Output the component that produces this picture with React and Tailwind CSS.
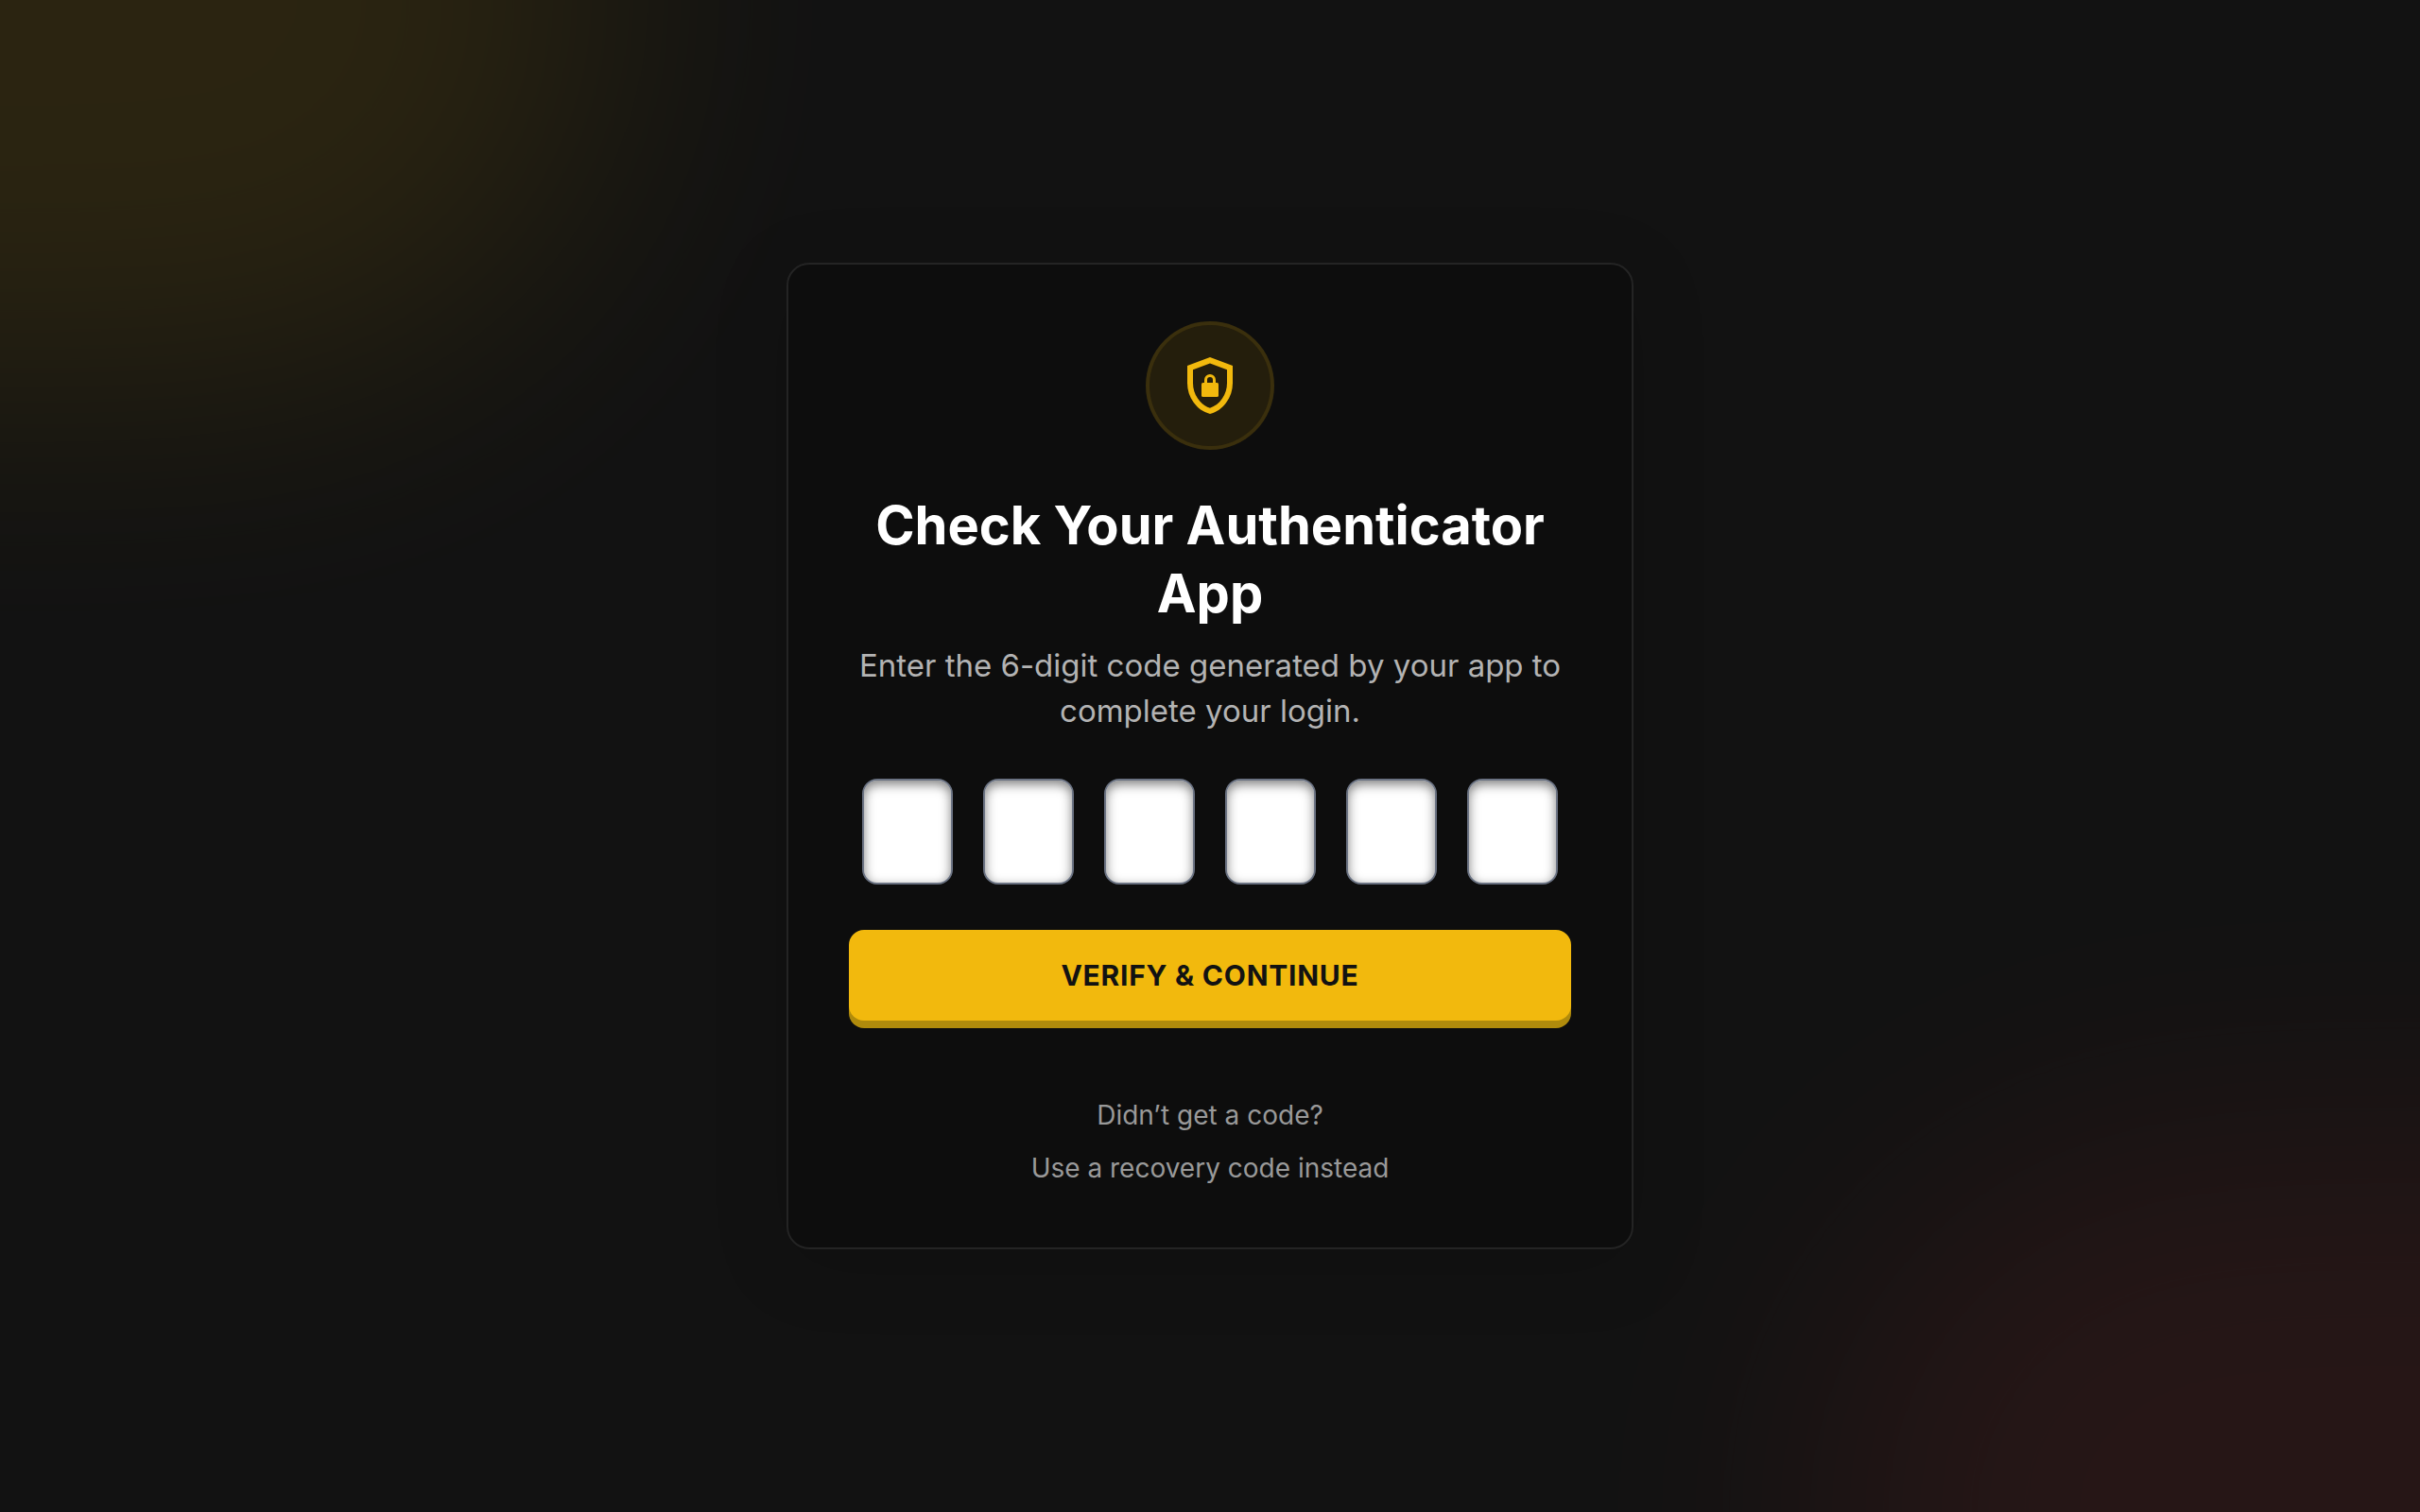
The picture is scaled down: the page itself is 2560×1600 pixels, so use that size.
import React from "react";

const digits = [1, 2, 3, 4, 5, 6];

function ShieldLockIcon() {
  return (
    <svg viewBox="0 0 24 24" className="size-18" fill="currentColor" aria-hidden="true">
      <path d="M12 22c-2.317-.583-4.229-1.912-5.738-3.987C4.754 15.938 4 13.633 4 11.1V5l8-3 8 3v6.1c0 2.533-.754 4.838-2.262 6.913C16.229 20.088 14.317 21.417 12 22zm0-2.1c1.733-.55 3.167-1.65 4.3-3.3S18 13.117 18 11.1V6.375l-6-2.25-6 2.25V11.1c0 2.017.567 3.85 1.7 5.5s2.567 2.75 4.3 3.3z" />
      <rect x="9" y="11" width="6" height="5" rx="0.5" />
      <path d="M10.5 11.2V10a1.5 1.5 0 0 1 3 0v1.2" fill="none" stroke="currentColor" strokeWidth="1" />
    </svg>
  );
}

function CodeInputs() {
  return (
    <fieldset aria-label="6-digit code" className="flex justify-center gap-8">
      {digits.map((n) => (
        <input
          key={n}
          type="text"
          inputMode="numeric"
          maxLength={1}
          aria-label={`Digit ${n}`}
          className="h-28 w-24 rounded-2xl border-2 border-gray-500 bg-white text-center text-5xl font-bold text-[#121212] shadow-[inset_0_4px_12px_rgba(0,0,0,0.5)] outline-none"
        />
      ))}
    </fieldset>
  );
}

export default function App() {
  return (
    <main className="relative flex min-h-screen items-center justify-center overflow-hidden bg-[#121212] p-8 font-['Inter','Liberation_Sans',sans-serif]">
      <div className="absolute -left-1/4 -top-1/4 h-1/2 w-1/2 rounded-full bg-[#f2b90d] opacity-11 blur-[144px]" />
      <div className="absolute -bottom-1/4 -right-1/4 h-1/2 w-1/2 rounded-full bg-[#ef4444] opacity-9 blur-[144px]" />

      <section className="relative flex w-full max-w-4xl flex-col rounded-3xl border-2 border-[#242424] bg-[#0d0d0d] p-16 shadow-[0_16px_80px_0_rgba(0,0,0,0.15)]">
        <div className="mb-12 flex size-32 items-center justify-center self-center rounded-full bg-[#f2b90d]/10 text-[#f2b90d] ring-4 ring-[#f2b90d]/20">
          <ShieldLockIcon />
        </div>

        <h1 className="text-center text-[56px] leading-[72px] font-bold text-white">
          Check Your Authenticator App
        </h1>
        <p className="mt-4 text-center text-[33px] leading-[48px] text-[#b3b3b3]">
          Enter the 6-digit code generated by your app to complete your login.
        </p>

        <form className="mt-12 flex flex-col gap-12" onSubmit={(e) => e.preventDefault()}>
          <CodeInputs />
          <button
            type="submit"
            className="h-24 w-full rounded-2xl bg-[#f2b90d] text-[30px] leading-[48px] font-bold tracking-wide text-[#121212] shadow-[0_8px_0_0_#b08b0c]"
          >
            VERIFY &amp; CONTINUE
          </button>
        </form>

        <div className="mt-20 flex flex-col items-center gap-4 text-[28px] leading-[40px] text-[#999999]">
          <a href="#resend">Didn’t get a code?</a>
          <a href="#recovery">Use a recovery code instead</a>
        </div>
      </section>
    </main>
  );
}
